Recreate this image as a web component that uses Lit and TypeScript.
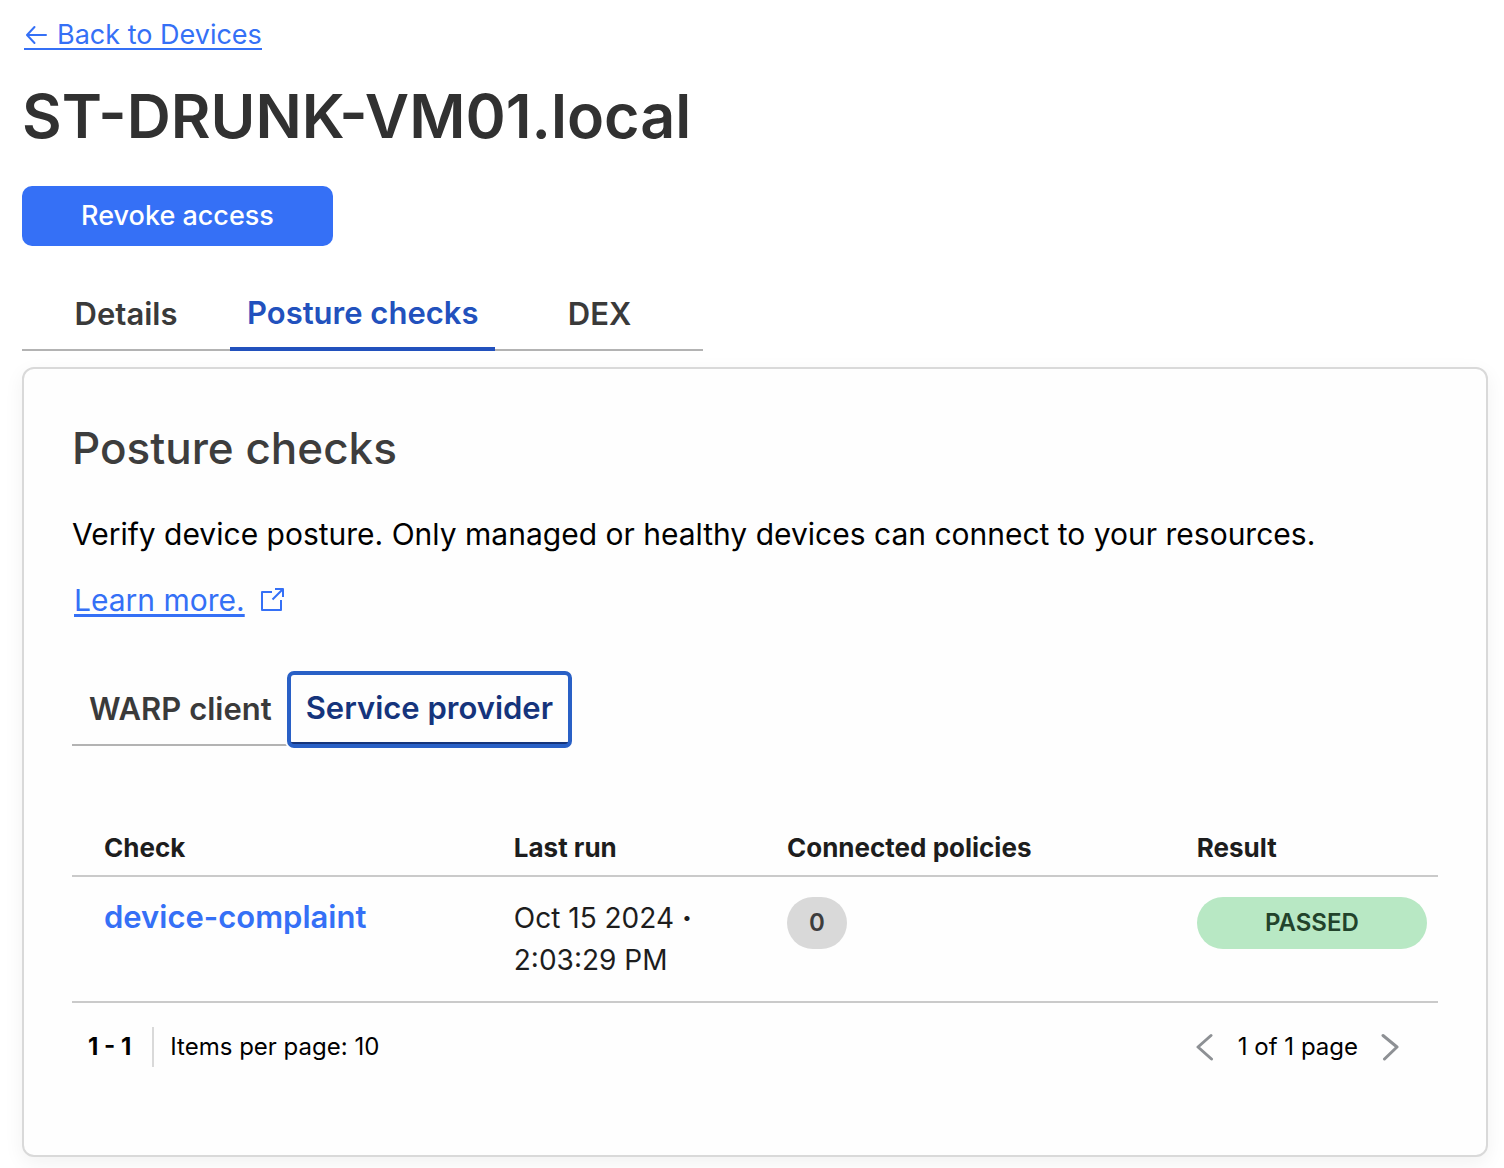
import { LitElement, html, css, svg } from "lit";
import { customElement, property, state } from "lit/decorators.js";
import { classMap } from "lit/directives/class-map.js";

interface PostureCheck {
  name: string;
  date: string;
  time: string;
  policies: number;
  result: string;
}

const CHECKS: PostureCheck[] = [
  { name: "device-complaint", date: "Oct 15 2024", time: "2:03:29 PM", policies: 0, result: "PASSED" },
];

const arrowLeft = svg`<path d="M22 11H3.500M10.500 3L3 11l7.500 8" />`;

@customElement("tab-list")
class TabList extends LitElement {
  @property({ type: Array }) tabs: string[] = [];
  @property({ type: Number }) selected = 0;
  @property({ type: Boolean, reflect: true }) wide = false;
  @property({ type: Boolean, reflect: true }) ringed = false;

  static styles = css`
    :host {
      display: block;
    }
    .tabs {
      display: flex;
    }
    .tab {
      box-sizing: border-box;
      height: 73px;
      padding: 0 17px;
      border: 0;
      border-bottom: 2px solid #b3b3b3;
      background: none;
      color: #3a3a3a;
      font: 600 31px/40px Inter, "Liberation Sans", sans-serif;
      white-space: nowrap;
      cursor: pointer;
    }
    :host([wide]) .tab {
      min-width: 208px;
    }
    .selected {
      border-bottom: 4px solid #2251bd;
      color: #2251bd;
    }
    :host([ringed]) .selected {
      position: relative;
      border-bottom-color: #15347c;
      border-radius: 5px;
      color: #15347c;
      outline: 4px solid #2960c6;
      outline-offset: -2px;
      box-shadow: 0 0 0 4px #fefefe;
    }
  `;

  render() {
    return html`<div class="tabs" role="tablist">
      ${this.tabs.map(
        (label, i) => html`<button
          class=${classMap({ tab: true, selected: i === this.selected })}
          role="tab"
          aria-selected=${i === this.selected ? "true" : "false"}
          @click=${() => (this.selected = i)}
        >${label}</button>`,
      )}
    </div>`;
  }
}

@customElement("app-root")
class AppRoot extends LitElement {
  @state() private checks = CHECKS;

  static styles = css`
    :host {
      display: block;
      font-family: Inter, "Liberation Sans", sans-serif;
      color: #000;
      background: #fff;
    }
    .page {
      padding: 22px 16px 11px 22px;
    }
    a {
      color: #3570f6;
    }
    svg {
      display: block;
      fill: none;
      stroke: currentColor;
    }
    .back {
      display: flex;
      width: fit-content;
      margin-left: 2px;
      font-size: 27px;
      line-height: 26px;
      text-decoration: none;
    }
    .back-text {
      display: flex;
      align-items: center;
      gap: 10px;
      border-bottom: 2px solid;
    }
    .title {
      margin: 26px 0 30px;
      color: #313131;
      font-size: 61px;
      font-weight: 600;
      line-height: 80px;
    }
    .revoke {
      display: block;
      width: 311px;
      height: 60px;
      margin-bottom: 32px;
      border: 0;
      border-radius: 10px;
      background: #3570f6;
      color: #fff;
      font: 500 27px/40px Inter, "Liberation Sans", sans-serif;
      cursor: pointer;
    }
    .card {
      margin-top: 16px;
      padding: 48px 48px 88px;
      border: 2px solid #d9d9d9;
      border-radius: 12px;
      background: #fefefe;
      box-shadow: 0 6px 20px rgba(0, 0, 0, 0.06);
    }
    .heading {
      margin: 0 0 32px;
      color: #3d3d3d;
      font-size: 44px;
      font-weight: 500;
      line-height: 62px;
    }
    .intro {
      margin: 0 0 19px;
      font-size: 30px;
      line-height: 46px;
    }
    .more {
      display: flex;
      align-items: center;
      gap: 16px;
      width: fit-content;
      margin: 0 0 49px 2px;
      font-size: 30px;
      line-height: 48px;
      text-decoration: none;
    }
    .more-text {
      text-decoration: underline;
      text-decoration-thickness: 3px;
      text-underline-offset: 3px;
    }
    .checks {
      width: 100%;
      margin-top: 75px;
      border-collapse: separate;
      border-spacing: 0;
      table-layout: fixed;
      color: #1d1d1d;
      text-align: left;
    }
    .checks th,
    .checks td {
      box-sizing: border-box;
      padding: 20px 11px 20px 32px;
      border-bottom: 2px solid #cacaca;
      vertical-align: top;
      font-size: 28px;
      line-height: 42px;
    }
    .checks th {
      padding-top: 10px;
      padding-bottom: 10px;
      font-size: 26px;
      font-weight: 700;
      line-height: 34px;
    }
    .w30 {
      width: 30%;
    }
    .w20 {
      width: 20%;
    }
    .name {
      display: block;
      font-size: 31px;
      font-weight: 600;
      line-height: 40px;
      text-decoration: none;
    }
    .dot {
      font-weight: 800;
    }
    .badge {
      display: block;
      width: 60px;
      border-radius: 26px;
      background: #d9d9d9;
      color: #3d3d3d;
      font-size: 24px;
      font-weight: 600;
      line-height: 52px;
      text-align: center;
    }
    .passed {
      width: auto;
      background: #b8e8c4;
      color: #22432b;
    }
    .footer {
      display: flex;
      align-items: center;
      justify-content: space-between;
      margin-top: 24px;
      padding: 0 38px 0 16px;
      font-size: 24px;
      line-height: 40px;
    }
    .range {
      display: flex;
      gap: 16px;
    }
    .count {
      padding-right: 21px;
      border-right: 2px solid #d9d9d9;
      font-weight: 700;
    }
    .pager {
      display: flex;
      align-items: center;
      gap: 22px;
    }
    .step {
      padding: 0;
      border: 0;
      background: none;
      color: #8d9094;
      cursor: pointer;
    }
  `;

  render() {
    return html`
      <main class="page">
        <a class="back" href="#devices">
          <span class="back-text">
            <svg width="23" height="22" viewBox="0 0 23 22" stroke-width="2" stroke-linecap="round" stroke-linejoin="round" aria-hidden="true">${arrowLeft}</svg>
            Back to Devices
          </span>
        </a>
        <h1 class="title">ST-DRUNK-VM01.local</h1>
        <button class="revoke">Revoke access</button>
        <tab-list wide .tabs=${["Details", "Posture checks", "DEX"]} .selected=${1}></tab-list>

        <section class="card">
          <h2 class="heading">Posture checks</h2>
          <p class="intro">Verify device posture. Only managed or healthy devices can connect to your resources.</p>
          <a class="more" href="#learn-more">
            <span class="more-text">Learn more.</span>
            <svg width="24" height="24" viewBox="0 0 24 24" stroke-width="2" stroke-linejoin="round" aria-hidden="true">
              <path d="M11 4H1v18h19V12M14 1h8v8M22 1L11.500 11.500" />
            </svg>
          </a>
          <tab-list ringed .tabs=${["WARP client", "Service provider"]} .selected=${1}></tab-list>

          <table class="checks">
            <thead>
              <tr>
                <th class="w30" scope="col">Check</th>
                <th class="w20" scope="col">Last run</th>
                <th class="w30" scope="col">Connected policies</th>
                <th class="w20" scope="col">Result</th>
              </tr>
            </thead>
            <tbody>
              ${this.checks.map(
                (c) => html`<tr>
                  <td><a class="name" href="#check">${c.name}</a></td>
                  <td>${c.date} <span class="dot">·</span><br />${c.time}</td>
                  <td><span class="badge">${c.policies}</span></td>
                  <td><span class="badge passed">${c.result}</span></td>
                </tr>`,
              )}
            </tbody>
          </table>

          <div class="footer">
            <div class="range">
              <span class="count">1 - 1</span>
              <span>Items per page: 10</span>
            </div>
            <nav class="pager" aria-label="Pagination">
              <button class="step" aria-label="Previous page">
                <svg width="20" height="28" viewBox="0 0 20 28" stroke-width="3" stroke-linecap="round" stroke-linejoin="round"><path d="M15 2.500L2 14l13.500 12" /></svg>
              </button>
              <span>1 of 1 page</span>
              <button class="step" aria-label="Next page">
                <svg width="20" height="28" viewBox="0 0 20 28" stroke-width="3" stroke-linecap="round" stroke-linejoin="round"><path d="M3 2.500L17 14L4.500 26" /></svg>
              </button>
            </nav>
          </div>
        </section>
      </main>
    `;
  }
}
